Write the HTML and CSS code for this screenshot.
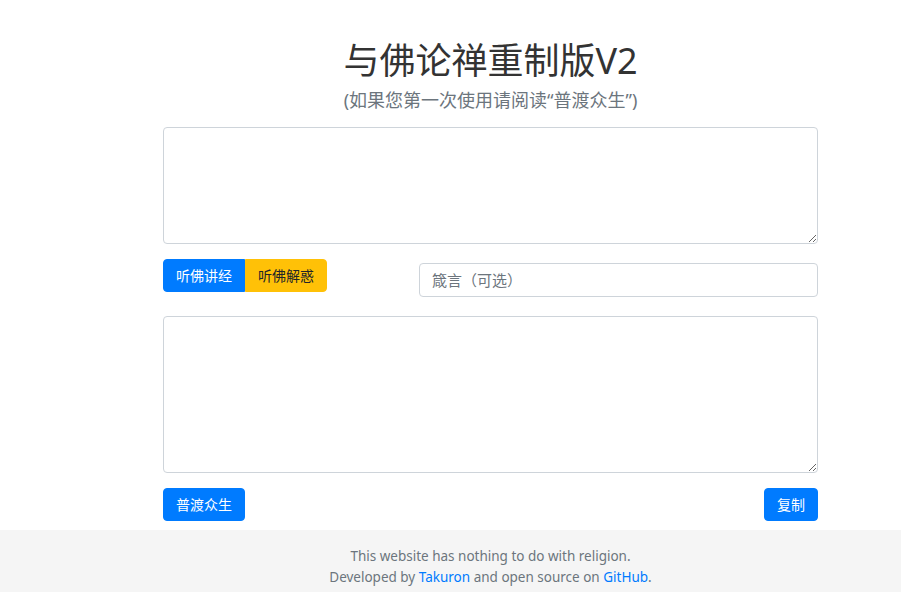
FILE: index.html
```html
<!DOCTYPE html>
<html lang="zh-CN">
  <head>
    <meta charset="UTF-8" />
    <meta name="viewport" content="width=device-width, initial-scale=1.0" />
    <title>与佛论禅重制版V2</title>
    <link rel="stylesheet" href="styles.css">
  </head>
  <body>
    <main class="container">
      <h1 class="title">与佛论禅重制版V2</h1>
      <p class="subtitle">(如果您第一次使用请阅读“普渡众生”)</p>

      <textarea class="text-box source" rows="4"></textarea>

      <div class="mode-row">
        <div class="btn-group">
          <button class="btn btn-blue">听佛讲经</button>
          <button class="btn btn-yellow">听佛解惑</button>
        </div>
        <input class="key-input" type="text" placeholder="箴言（可选）" />
      </div>

      <textarea class="text-box result" rows="6"></textarea>

      <div class="action-row">
        <button class="btn btn-blue">普渡众生</button>
        <button class="btn btn-blue">复制</button>
      </div>
    </main>

    <footer class="footer">
      <div class="footer-inner">
        <p>This website has nothing to do with religion.</p>
        <p>Developed by <a href="#">Takuron</a> and open source on <a href="#">GitHub</a>.</p>
      </div>
    </footer>
  </body>
</html>
```

FILE: styles.css
```css
body {
  margin: 0;
  font-family: "Noto Sans", "Noto Sans CJK SC", sans-serif;
  background-color: #fff;
  color: #212529;
}
.container {
  width: 655px;
  margin-left: 163px;
  padding-top: 39px;
  display: flex;
  flex-direction: column;
}
.title {
  margin: 0;
  text-align: center;
  font-size: 36px;
  font-weight: 400;
  line-height: 44px;
  color: #333;
}
.subtitle {
  margin: 4px 0 0;
  text-align: center;
  font-size: 18px;
  line-height: 26px;
  color: #6c757d;
}
.text-box {
  box-sizing: border-box;
  width: 100%;
  border: 1px solid #ced4da;
  border-radius: 4px;
  padding: 6px 12px;
  font-family: inherit;
  font-size: 16px;
  resize: vertical;
}
.source {
  margin-top: 14px;
  height: 117px;
}
.result {
  margin-top: 19px;
  height: 157px;
}
.mode-row {
  display: grid;
  grid-template-columns: 256px 1fr;
  align-items: start;
  margin-top: 15px;
}
.btn-group {
  display: flex;
}
.btn {
  border: 1px solid transparent;
  border-radius: 4px;
  padding: 0 12px;
  height: 33px;
  font-family: inherit;
  font-size: 14px;
  line-height: 31px;
  cursor: pointer;
}
.btn-blue {
  background-color: #007bff;
  border-color: #007bff;
  color: #fff;
}
.btn-yellow {
  background-color: #ffc107;
  border-color: #ffc107;
  color: #212529;
}
.btn-group .btn:first-child {
  border-top-right-radius: 0;
  border-bottom-right-radius: 0;
}
.btn-group .btn:last-child {
  border-top-left-radius: 0;
  border-bottom-left-radius: 0;
}
.key-input {
  box-sizing: border-box;
  height: 34px;
  margin-top: 4px;
  border: 1px solid #ced4da;
  border-radius: 4px;
  padding: 0 12px;
  font-family: inherit;
  font-size: 15px;
}
.key-input::placeholder {
  color: #6c757d;
}
.action-row {
  display: flex;
  justify-content: space-between;
  margin-top: 15px;
}
.footer {
  margin-top: 9px;
  background-color: #f5f5f5;
  padding: 16px 0 8px;
  font-size: 13.5px;
  color: #6c757d;
}
.footer-inner {
  width: 655px;
  margin-left: 163px;
  text-align: center;
}
.footer p {
  margin: 0;
  line-height: 21px;
}
.footer a {
  color: #007bff;
  text-decoration: none;
}
```
